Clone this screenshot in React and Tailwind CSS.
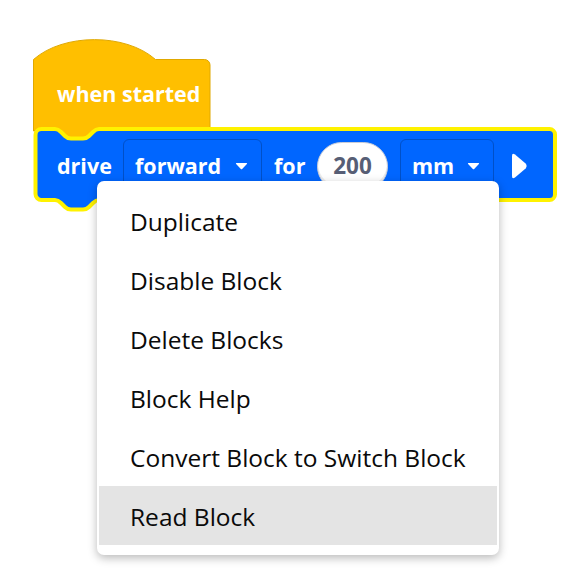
import React from 'react';

const menuItems = [
  'Duplicate',
  'Disable Block',
  'Delete Blocks',
  'Block Help',
  'Convert Block to Switch Block',
  'Read Block',
];

function Caret() {
  return (
    <svg width="13" height="8" viewBox="0 0 13 8" className="shrink-0">
      <path d="M1.5 1 H11.5 Q12.6 1 11.9 1.9 L7.2 7 Q6.5 7.7 5.8 7 L1.1 1.9 Q0.4 1 1.5 1 Z" fill="#ffffff" />
    </svg>
  );
}

function Dropdown({ label, width }) {
  return (
    <div
      className="h-[54px] rounded-[6px] border border-[#0050c8] flex items-center justify-between pl-[11px] pr-[13px] shrink-0"
      style={{ width }}
    >
      <span>{label}</span>
      <Caret />
    </div>
  );
}

export default function App() {
  return (
    <div className="relative w-[583px] h-[582px] bg-white overflow-hidden font-['Open_Sans','Noto_Sans',sans-serif]">
      {/* block shapes */}
      <svg className="absolute inset-0" width="583" height="582" viewBox="0 0 583 582">
        <path
          d="M33.5 59.5 C63.5 33 125.5 33 155.5 59.5 H204.5 A5.5 5.5 0 0 1 210 65 V141 H35.5 V131 H33.5 Z"
          fill="#ffbf00"
          stroke="#e0a800"
          strokeWidth="1"
        />
        <path
          d="M35.5 135 A6 6 0 0 1 41.5 129 H55 c3 0 4.5 1.5 6 3 l4 4 c1.5 1.5 3 2.5 6 2.5 h12 c3 0 4.5 -1 6 -2.5 l4 -4 c1.5 -1.5 3 -3 6 -3 H549.5 A5.5 5.5 0 0 1 555 134.5 V194.5 A5.5 5.5 0 0 1 549.5 200 H99 c-3 0 -4.5 1.5 -6 3 l-4 4 c-1.5 1.5 -3 2.5 -6 2.5 h-12 c-3 0 -4.5 -1 -6 -2.5 l-4 -4 c-1.5 -1.5 -3 -3 -6 -3 H41.5 A6 6 0 0 1 35.5 194 Z"
          fill="#0066ff"
          stroke="#fff200"
          strokeWidth="4"
          strokeLinejoin="round"
        />
      </svg>

      {/* hat block label */}
      <div className="absolute left-[33px] top-[59px] w-[177px] h-[72px] flex items-center pl-[24px] pb-[2px] text-white font-bold text-[21.5px]">
        when started
      </div>

      {/* drive block content */}
      <div className="absolute left-[33px] top-[139px] w-[524px] h-[54px] flex items-center pl-[24px] text-white font-bold text-[21.5px]">
        <span className="w-[55px] mr-[11px]">drive</span>
        <Dropdown label="forward" width={139} />
        <span className="w-[32px] ml-[12px] mr-[11px]">for</span>
        <div className="w-[71px] h-[49px] rounded-full bg-white border border-[#c9ccd6] shadow-[inset_0_-3px_0_rgba(0,0,0,0.08)] flex items-center justify-center text-[#575e75] text-[22.5px] shrink-0">
          200
        </div>
        <div className="ml-[12px]">
          <Dropdown label="mm" width={94} />
        </div>
        <svg width="18" height="28" viewBox="0 0 18 28" className="ml-[16px] shrink-0">
          <path d="M2 4 Q2 0.5 5 2.6 L15.6 11.6 Q17.6 14 15.6 16.4 L5 25.4 Q2 27.5 2 24 Z" fill="#ffffff" />
        </svg>
      </div>

      {/* context menu */}
      <div className="absolute left-[97px] top-[181px] w-[402px] rounded-[7px] bg-white shadow-[0_3px_10px_rgba(0,0,0,0.28)] py-[10px] px-[2px]">
        {menuItems.map((item) => (
          <div
            key={item}
            className={`h-[59px] flex items-center pl-[31px] pt-[3px] text-[24.5px] text-[#0a0a0a] ${item === 'Read Block' ? 'bg-[#e4e4e4]' : ''}`}
          >
            {item}
          </div>
        ))}
      </div>
    </div>
  );
}
